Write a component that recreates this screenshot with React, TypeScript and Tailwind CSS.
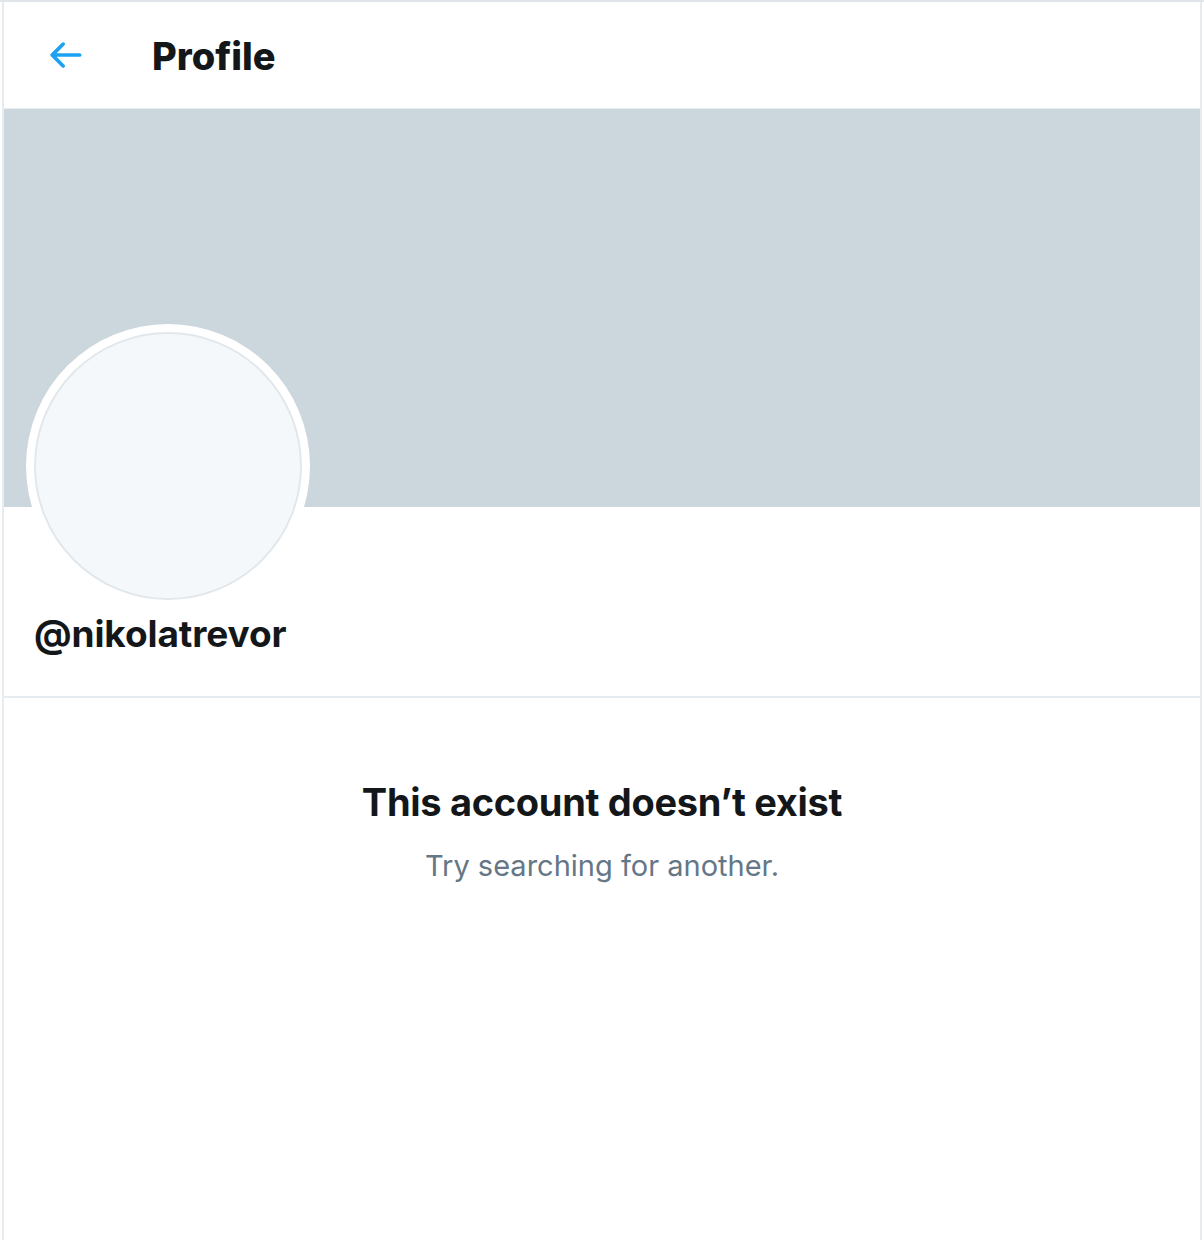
import React from "react";

export default function App() {
  return (
    <div className="w-[1204px] h-[1240px] bg-white overflow-hidden" style={{ fontFamily: "Inter, 'Noto Sans', sans-serif" }}>
      <div className="h-[2px] w-full bg-[#e1e4e8]" />
      <div className="ml-[2px] w-[1200px] h-[1238px] border-x-2 border-[#e6ecf0] flex flex-col">
        <div className="h-[107px] border-b border-[#e6ecf0] flex items-center shrink-0">
          <div className="w-[44px] h-[44px] ml-[39px] mt-[0px]">
            <svg viewBox="0 0 24 24" width="44" height="44" fill="#1da1f2">
              <path d="M20 11H7.414l4.293-4.293c.39-.39.39-1.023 0-1.414s-1.023-.39-1.414 0l-6 6c-.39.39-.39 1.023 0 1.414l6 6c.195.195.45.293.707.293s.512-.098.707-.293c.39-.39.39-1.023 0-1.414L7.414 13H20c.553 0 1-.447 1-1s-.447-1-1-1z" />
            </svg>
          </div>
          <div className="ml-[65px] text-[38px] font-extrabold text-[#14171a] tracking-[0px] mt-[2px]">Profile</div>
        </div>
        <div className="h-[398px] bg-[#ccd6dd] shrink-0" />
        <div className="border-b-2 border-[#e6ecf0] h-[191px] shrink-0 pl-[22px]">
          <div className="mt-[-183px] w-[284px] h-[284px] rounded-full bg-white flex items-center justify-center">
            <div className="w-[268px] h-[268px] rounded-full bg-[#f5f8fa] border-2 border-[#e1e8ed]" />
          </div>
          <div className="ml-[8px] mt-[0px] text-[37px] font-bold text-[#14171a] leading-[52px] tracking-[-0.1px]">@nikolatrevor</div>
        </div>
        <div className="flex flex-col items-center pt-[81px]">
          <div className="text-[38px] font-bold text-[#14171a] leading-[46px] tracking-[-0.3px]">This account doesn’t exist</div>
          <div className="mt-[22px] text-[29px] text-[#657786] leading-[38px]">Try searching for another.</div>
        </div>
      </div>
    </div>
  );
}
